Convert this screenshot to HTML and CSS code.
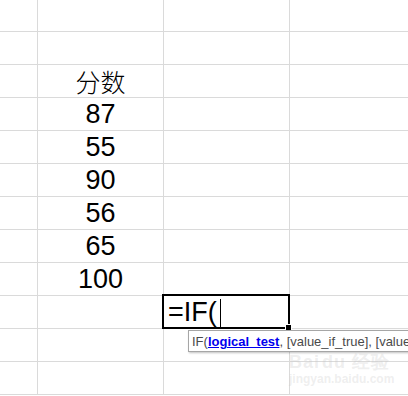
FILE: index.html
```html
<!DOCTYPE html>
<html>
<head>
<meta charset="utf-8">
<link rel="stylesheet" href="styles.css">
</head>
<body>
<div class="sheet">
  <div class="grid">
    <div class="c"></div><div class="c"></div><div class="c"></div><div class="c"></div>
    <div class="c"></div><div class="c"></div><div class="c"></div><div class="c"></div>
    <div class="c"></div><div class="c cn">分数</div><div class="c"></div><div class="c"></div>
    <div class="c"></div><div class="c num">87</div><div class="c"></div><div class="c"></div>
    <div class="c"></div><div class="c num">55</div><div class="c"></div><div class="c"></div>
    <div class="c"></div><div class="c num">90</div><div class="c"></div><div class="c"></div>
    <div class="c"></div><div class="c num">56</div><div class="c"></div><div class="c"></div>
    <div class="c"></div><div class="c num">65</div><div class="c"></div><div class="c"></div>
    <div class="c"></div><div class="c num">100</div><div class="c"></div><div class="c"></div>
    <div class="c"></div><div class="c"></div><div class="c active"><span class="formula">=IF(</span><span class="caret"></span></div><div class="c"></div>
    <div class="c"></div><div class="c"></div><div class="c"></div><div class="c"></div>
    <div class="c"></div><div class="c"></div><div class="c"></div><div class="c"></div>
  </div>
  <div class="selection"><span class="handle"></span></div>
  <div class="tip"><span class="tip-text">IF(<span class="arg">logical_test</span>, [value_if_true], [value_if_false])</span></div>
  <div class="mark">
    <div class="mark-top">Bai<span class="du">du</span> 经验</div>
    <div class="mark-url">jingyan.baidu.com</div>
  </div>
</div>
</body>
</html>
```
FILE: styles.css
```css
html, body {
  margin: 0;
  padding: 0;
  background: #ffffff;
  overflow: hidden;
}
.sheet {
  position: relative;
  width: 408px;
  height: 396px;
  overflow: hidden;
}
.grid {
  display: grid;
  grid-template-columns: 38px 126px 126px 126px;
  grid-auto-rows: 33px;
  margin-top: -1px;
}
.c {
  box-sizing: border-box;
  border-right: 1px solid #dadada;
  border-bottom: 1px solid #dadada;
  line-height: 32px;
  font-family: "Liberation Sans", Arial, sans-serif;
  font-size: 27px;
  color: #000;
  white-space: nowrap;
}
.num {
  text-align: center;
}
.cn {
  text-align: center;
  font-family: "Noto Sans CJK SC", sans-serif;
  font-size: 25px;
  font-weight: 300;
}
.active {
  display: flex;
  align-items: center;
  padding-left: 4px;
  overflow: visible;
}
.formula {
  line-height: 32px;
}
.caret {
  display: inline-block;
  width: 1px;
  height: 28px;
  background: #000;
  margin-left: 3px;
  margin-top: 1px;
}
.selection {
  position: absolute;
  left: 162px;
  top: 294px;
  width: 128px;
  height: 35px;
  box-sizing: border-box;
  border: 2px solid #000;
}
.handle {
  position: absolute;
  right: -4px;
  bottom: -4px;
  width: 5px;
  height: 5px;
  background: #000;
  border: 1px solid #fff;
}
.tip {
  position: absolute;
  left: 188px;
  top: 330px;
  width: 240px;
  height: 22px;
  box-sizing: border-box;
  padding: 1px 4px 0 3px;
  border: 1px solid #a6a6a6;
  background: #fff;
  box-shadow: 1px 1px 2px rgba(0,0,0,0.25);
  overflow: hidden;
}
.tip-text {
  font-family: "Liberation Sans", Arial, sans-serif;
  font-size: 13px;
  line-height: 19px;
  color: #4a4a4a;
  white-space: nowrap;
}
.arg {
  color: #0000ee;
  font-weight: bold;
  text-decoration: underline;
}
.mark {
  position: absolute;
  left: 289px;
  top: 352px;
  color: rgba(200,200,200,0.3);
  font-family: "Liberation Sans", Arial, sans-serif;
  pointer-events: none;
}
.mark-top {
  font-size: 18px;
  font-weight: bold;
  line-height: 20px;
  letter-spacing: 1px;
}
.du {
  margin-left: 2px;
}
.mark-url {
  font-size: 12px;
  font-weight: bold;
  line-height: 14px;
}
```
